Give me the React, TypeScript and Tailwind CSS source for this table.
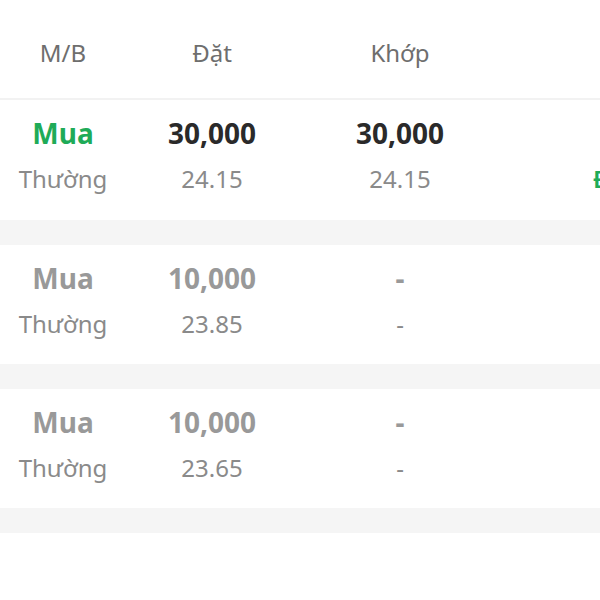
import React from 'react';

type Order = {
  side: string;
  kind: string;
  qty: string;
  price: string;
  matchedQty: string;
  matchedPrice: string;
  status?: string;
  active: boolean;
};

const orders: Order[] = [
  { side: 'Mua', kind: 'Thường', qty: '30,000', price: '24.15', matchedQty: '30,000', matchedPrice: '24.15', status: 'Đã khớp', active: true },
  { side: 'Mua', kind: 'Thường', qty: '10,000', price: '23.85', matchedQty: '-', matchedPrice: '-', active: false },
  { side: 'Mua', kind: 'Thường', qty: '10,000', price: '23.65', matchedQty: '-', matchedPrice: '-', active: false },
];

const Cell = ({ w, top, bottom, topClass, bottomClass }: { w: string; top: string; bottom: string; topClass: string; bottomClass: string }) => (
  <div className={`${w} shrink-0 flex flex-col items-center`}>
    <div className={`h-[44px] flex items-center text-[28px] font-bold ${topClass}`}>{top}</div>
    <div className={`h-[47px] flex items-center text-[24px] ${bottomClass}`}>{bottom}</div>
  </div>
);

export default function App() {
  return (
    <div className="w-[600px] h-[600px] overflow-hidden bg-white" style={{ fontFamily: '"Noto Sans", "Open Sans", sans-serif' }}>
      <div className="h-[98px] flex items-center pt-[8px] text-[24px] text-[#6e6e6e]">
        <div className="w-[126px] text-center">M/B</div>
        <div className="w-[172px] text-center">Đặt</div>
        <div className="w-[204px] text-center">Khớp</div>
      </div>
      <div className="h-[2px] bg-[#f2f2f2]" />

      {orders.map((o, i) => (
        <div key={i}>
          <div className={`${i === 0 ? 'h-[120px]' : 'h-[119px]'} flex pt-[11px] whitespace-nowrap`}>
            <Cell
              w="w-[126px]"
              top={o.side}
              bottom={o.kind}
              topClass={o.active ? 'text-[#1fab58]' : 'text-[#999999]'}
              bottomClass="text-[#8a8a8a]"
            />
            <Cell
              w="w-[172px]"
              top={o.qty}
              bottom={o.price}
              topClass={o.active ? 'text-[#2a2a2a]' : 'text-[#999999]'}
              bottomClass="text-[#8a8a8a]"
            />
            <Cell
              w="w-[204px]"
              top={o.matchedQty}
              bottom={o.matchedPrice}
              topClass={o.active ? 'text-[#2a2a2a]' : 'text-[#999999]'}
              bottomClass="text-[#8a8a8a]"
            />
            <div className="flex flex-col pl-[91px]">
              <div className="h-[44px]" />
              <div className="h-[47px] flex items-center text-[24px] font-semibold text-[#1fab58]">{o.status ?? ''}</div>
            </div>
          </div>
          <div className="h-[25px] bg-[#f5f5f5]" />
        </div>
      ))}
    </div>
  );
}
